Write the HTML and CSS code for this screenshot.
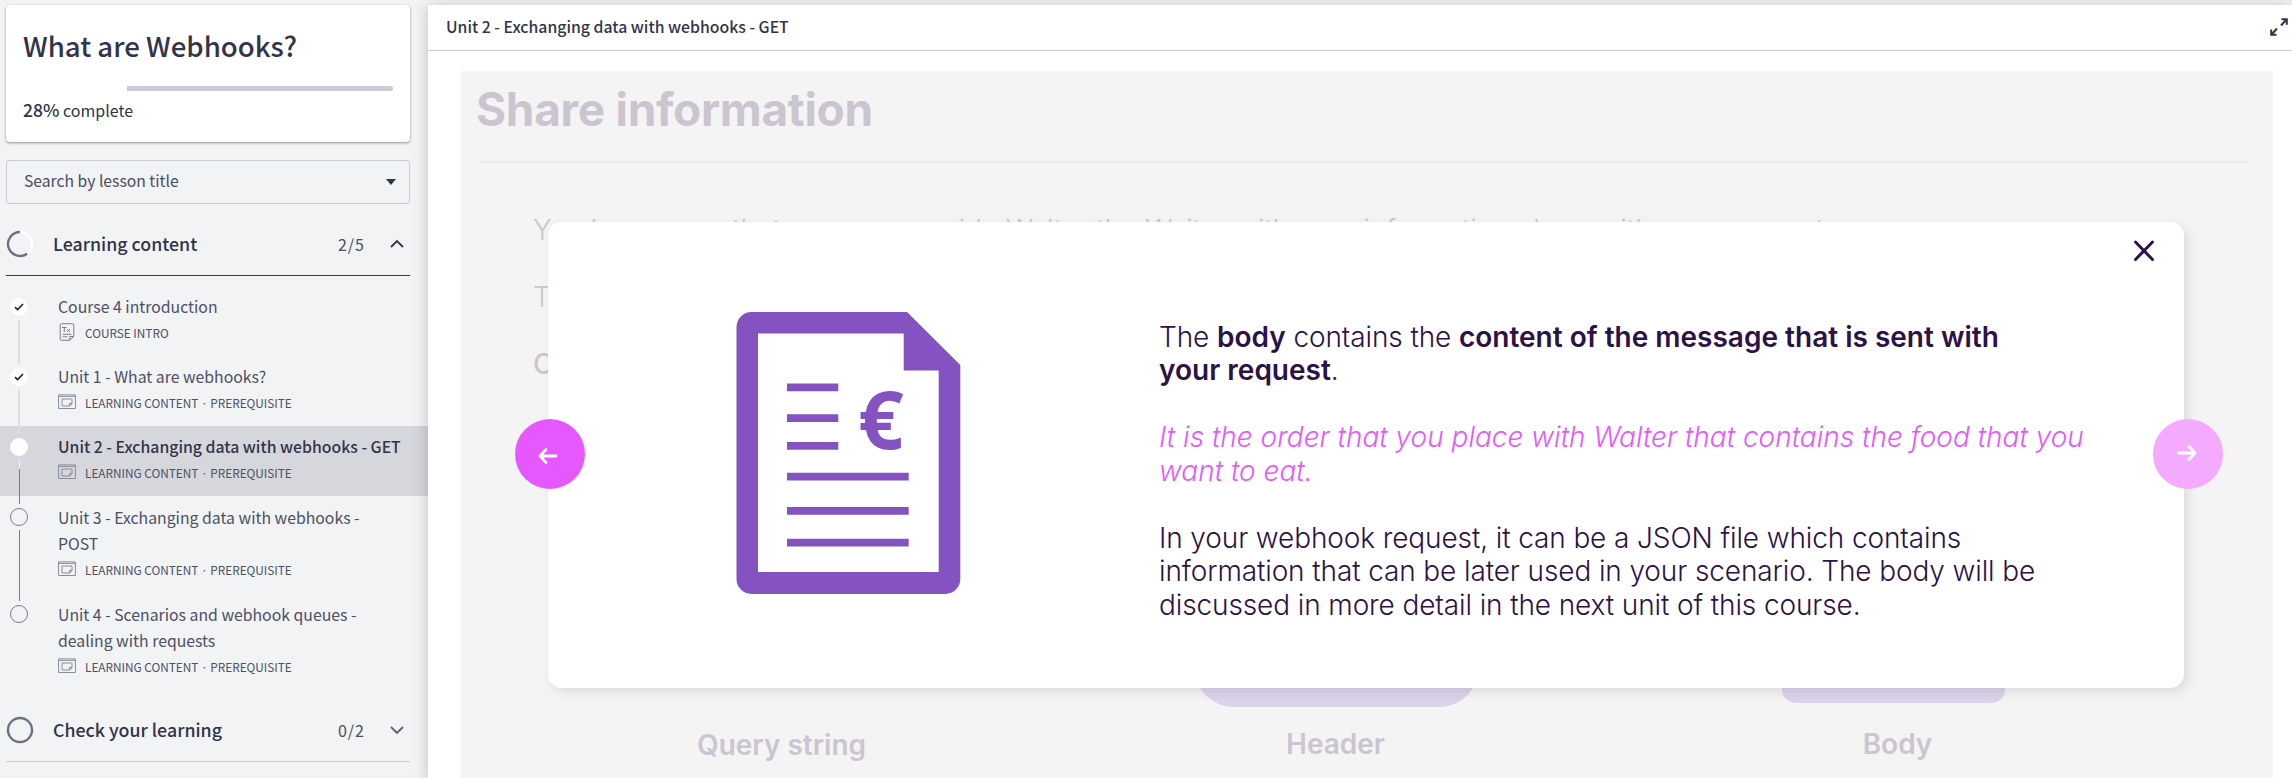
FILE: index.html
```html
<!DOCTYPE html>
<html lang="en">
<head>
<meta charset="utf-8">
<title>What are Webhooks?</title>
<link rel="stylesheet" href="styles.css">
</head>
<body>
<svg class="defs" aria-hidden="true">
  <symbol id="i-slide" viewBox="0 0 18 16"><path d="M.6.9h16.8v13.6H.6zM.6 2.4h16.8M4 5h10v4.8L11.600 12H4zM14 9.400h-2.600V12"/></symbol>
  <symbol id="i-check" viewBox="0 0 10 8"><path d="M1 4.200l2.600 2.400L9 1"/></symbol>
</svg>
<div class="app">
  <aside class="sidebar">
    <section class="card">
      <h1 class="card-title"><span>What are Webhooks?</span></h1>
      <div class="progress"><div class="progress-done"></div><div class="progress-rest"></div></div>
      <p class="complete"><b>28%</b> complete</p>
    </section>
    <div class="search"><span>Search by lesson title</span><svg class="caret" viewBox="0 0 10 6"><path d="M0 0h10L5 6z"/></svg></div>
    <div class="chapter chapter-open">
      <svg class="ring" viewBox="0 0 28 28"><circle cx="14" cy="14" r="12" stroke="#fff"/><path d="M14 2A12 12 0 1 0 21.100 23.700" stroke="#6f7183"/></svg>
      <span class="chapter-name">Learning content</span><span class="count">2/5</span>
      <svg class="chev" viewBox="0 0 14 8"><path d="M1 7l6-6 6 6"/></svg>
    </div>
    <ol class="lessons">
      <li class="lesson first">
        <div class="track"><i class="dot done"><svg><use href="#i-check"/></svg></i><i class="line pale"></i></div>
        <div class="info"><div class="name">Course 4 introduction</div>
          <div class="meta"><svg class="ico-page" viewBox="0 0 16 18"><path d="M2.500.700h11q1.300 0 1.300 1.300v11l-4 4.300H2.500q-1.300 0-1.300-1.300V2Q1.200.700 2.500.700zM14.800 13.500h-4V17M3.500 11.300h9M3.500 13.800h5"/><path class="tx" d="M3 4.500h4.500M5.300 4.500v4.500M8 6l3 3M11 6L8 9"/></svg><span>COURSE INTRO</span></div></div>
      </li>
      <li class="lesson">
        <div class="track"><i class="dot done"><svg><use href="#i-check"/></svg></i><i class="line pale"></i></div>
        <div class="info"><div class="name">Unit 1 - What are webhooks?</div>
          <div class="meta"><svg class="ico"><use href="#i-slide"/></svg><span>LEARNING CONTENT · PREREQUISITE</span></div></div>
      </li>
      <li class="lesson current">
        <div class="track"><i class="dot done"></i><i class="line next-line"></i></div>
        <div class="info"><div class="name">Unit 2 - Exchanging data with webhooks - GET</div>
          <div class="meta"><svg class="ico"><use href="#i-slide"/></svg><span>LEARNING CONTENT · PREREQUISITE</span></div></div>
      </li>
      <li class="lesson tall">
        <div class="track"><i class="dot"></i><i class="line"></i></div>
        <div class="info"><div class="name">Unit 3 - Exchanging data with webhooks -<br>POST</div>
          <div class="meta"><svg class="ico"><use href="#i-slide"/></svg><span>LEARNING CONTENT · PREREQUISITE</span></div></div>
      </li>
      <li class="lesson tall">
        <div class="track"><i class="dot"></i></div>
        <div class="info"><div class="name">Unit 4 - Scenarios and webhook queues -<br>dealing with requests</div>
          <div class="meta"><svg class="ico"><use href="#i-slide"/></svg><span>LEARNING CONTENT · PREREQUISITE</span></div></div>
      </li>
    </ol>
    <div class="chapter">
      <svg class="ring" viewBox="0 0 28 28"><circle cx="14" cy="14" r="12" stroke="#6f7183"/></svg>
      <span class="chapter-name">Check your learning</span><span class="count">0/2</span>
      <svg class="chev closed" viewBox="0 0 14 8"><path d="M1 1l6 6 6-6"/></svg>
    </div>
  </aside>
  <main class="main">
    <header class="bar"><span class="bar-title">Unit 2 - Exchanging data with webhooks - GET</span>
      <svg class="expand" viewBox="0 0 18 18"><path d="M11 7.500l5.500-6M11.500 1.200h5.300v5.500M7 10.500l-5.500 6M1.200 11.500v5.300h5.300"/></svg>
    </header>
    <div class="sheet">
      <h2 class="sheet-title"><span>Share information</span></h2>
      <div class="copy">
        <p><span>You have seen that you can provide Walter the Waiter with your information along with your request.</span></p>
        <p>There are three ways:</p>
        <p class="strong">Click on them:</p>
      </div>
      <div class="kinds">
        <div class="kind query"><span>Query string</span></div>
        <div class="kind header"><div class="shape"></div><span>Header</span></div>
        <div class="kind body"><div class="shape"></div><span>Body</span></div>
      </div>
      <div class="modal">
        <div class="figure">
          <svg class="doc" viewBox="736 312 225 283">
            <path fill="#8552c1" fill-rule="evenodd" d="M751.500 312H907l53.300 53V579a15 15 0 0 1-15 15H751.500a15 15 0 0 1-15-15V327a15 15 0 0 1 15-15zM758 333.500V572h180.700V370.500h-35v-37z"/>
            <path fill="#8552c1" d="M787 383.500h51.300v7.700H787zM787 414.300h51.300v7.700H787zM787 442h51.300v7.700H787zM787 472.700h121.700v7.700H787zM787 507h121.700v7.700H787zM787 538.700h121.700v7.700H787z"/>
            <text x="858" y="449" class="euro">€</text>
          </svg>
        </div>
        <div class="message">
          <p>The <b>body</b> contains the <b>content of the message that is sent with</b><br><b>your request</b>.</p>
          <p class="pink">It is the order that you place with Walter that contains the food that you<br>want to eat.</p>
          <p>In your webhook request, it can be a JSON file which contains<br>information that can be later used in your scenario. The body will be<br>discussed in more detail in the next unit of this course.</p>
        </div>
        <svg class="close" viewBox="0 0 24 24"><path d="M3.500 3l17 17.500M20.500 3l-17 17.500"/></svg>
        <div class="nav prev"><svg viewBox="0 0 20 16"><path d="M18 8H2.500M8 1.500L2 8l6 6.500"/></svg></div>
        <div class="nav next"><svg viewBox="0 0 20 16"><path d="M1.500 8H18M12 1.500L18 8l-6 6.500"/></svg></div>
      </div>
    </div>
  </main>
</div>
</body>
</html>
```
FILE: styles.css
```css
* { box-sizing: border-box; }
body { margin: 0; width: 2292px; height: 778px; overflow: hidden; background: #f1f3f5; font-family: "Noto Sans CJK JP", "Noto Sans", sans-serif; color: #32344a; }
h1, h2, p, ol { margin: 0; padding: 0; font-weight: 400; }
svg { fill: none; stroke: currentColor; flex: none; overflow: visible; }
.defs { position: absolute; width: 0; height: 0; }
.app { display: flex; height: 778px; padding-top: 5px; }
.sidebar { width: 428px; flex: none; }
.card { margin: 0 0 0 6px; width: 404px; height: 137px; padding: 20px 17px 0 18px; background: #fff; border-radius: 4px; box-shadow: 0 1px 3px rgba(0,0,0,.4); }
.card-title { font-size: 27.600px; line-height: 40px; font-weight: 500; white-space: nowrap; text-indent: -1px; }
.progress { display: flex; height: 5px; margin-top: 21px; }
.progress-done { width: 103px; }
.progress-rest { flex: 1; background: #c9cbd6; border-radius: 0 3px 3px 0; }
.complete { margin-top: 7px; font-size: 16px; line-height: 24px; text-indent: -1px; }
.complete b { font-weight: 500; font-size: 17.500px; }
.search { margin: 18px 0 0 6px; width: 404px; height: 44px; padding: 0 13px 3px 17px; display: flex; align-items: center; justify-content: space-between; border: 1px solid #c9cbd6; border-radius: 4px; font-size: 15.700px; color: #4b4d60; }
.caret { width: 10px; height: 6px; fill: #32344a; stroke: none; position: relative; top: 1px; }
.chapter { margin-left: 6px; width: 404px; height: 63px; display: flex; align-items: center; border-bottom: 1px solid #c9cbd6; }
.chapter-open { margin-top: 9px; border-color: #32344a; }
.ring { width: 28px; height: 28px; stroke-width: 2.400; margin: 0 19px 0 0; }
.chapter-name { flex: 1; font-size: 17.800px; font-weight: 500; padding-bottom: 2px; }
.count { font-size: 16px; letter-spacing: 1px; margin-right: 25px; padding-bottom: 1px; color: #4b4d60; }
.chev { width: 14px; height: 8px; margin-right: 6px; stroke-width: 1.800; }
.closed { color: #5d5f72; }
.lessons { list-style: none; padding: 10px 0 9px; }
.lesson { display: flex; height: 70px; padding: 8px 0 0 10px; color: #4e5064; }
.lesson.tall { height: 97px; }
.tall .info { padding-top: 1px; }
.current { background: #d6d7dc; }
.current .name { font-weight: 500; color: #32344a; }
.track { width: 18px; margin-right: 30px; display: flex; flex-direction: column; align-items: center; gap: 4px; padding-top: 4px; margin-bottom: -8px; }
.dot { width: 18px; height: 18px; flex: none; border: 1.500px solid #7b7d8e; border-radius: 50%; display: flex; align-items: center; justify-content: center; color: #222; }
.dot.done { background: #fff; border-color: #fff; }
.dot svg { width: 10px; height: 8px; stroke-width: 1.600; }
.line { width: 1px; flex: 1; background: #7b7d8e; }
.line.pale { width: 2px; background: #dcdee2; }
.next-line { background: linear-gradient(#f1f3f5 9px, #7b7d8e 9px); }
.name { font-size: 15.800px; line-height: 26px; white-space: nowrap; }
.meta { display: flex; align-items: center; height: 24px; font-size: 11.800px; white-space: nowrap; }
.ico { width: 18px; height: 16px; margin-right: 9px; color: #8a8c9b; }
.ico-page { width: 16px; height: 18px; margin: 0 10px 0 1px; color: #7d7f90; }
.main { flex: 1; background: #fff; box-shadow: 0 2px 14px rgba(0,0,0,.22); min-width: 0; }
.bar { height: 46px; border-bottom: 1px solid #c9cbd6; padding: 0 4px 2px 18px; display: flex; align-items: center; justify-content: space-between; }
.bar-title { font-size: 15.800px; font-weight: 500; }
.expand { width: 18px; height: 18px; stroke-width: 2; }
.sheet { position: relative; margin: 20px 0 0 33px; width: 1812px; height: 707px; background: #f4f4f4; font-family: "Inter Light", Inter, sans-serif; color: #cbc5d1; overflow: hidden; }
.sheet-title { height: 92px; margin: 0 23px 0 20px; border-bottom: 2px solid #eaeaea; font-family: Inter, sans-serif; font-size: 46px; line-height: 76px; font-weight: 700; letter-spacing: -.300px; text-indent: -5px; }
.copy { padding: 50px 0 0 72px; font-size: 28px; font-weight: 300; line-height: 34px; }
.copy p { margin-bottom: 33px; white-space: nowrap; }
.copy .strong { font-family: Inter, sans-serif; font-weight: 500; }
.kinds { position: absolute; inset: 560px 0 0 0; font-family: Inter, sans-serif; font-size: 28px; font-weight: 600; }
.kind { position: absolute; top: 0; display: flex; flex-direction: column; align-items: center; }
.query { left: 236px; top: 97px; }
.header { left: 734px; }
.body { left: 1321px; }
.header .shape { width: 283px; height: 76px; border-radius: 40px; background: #dcd2ea; margin-bottom: 20px; }
.body .shape { width: 223px; height: 72px; border-radius: 14px; background: #dcd2ea; margin-bottom: 24px; }
.header span { padding-right: 2px; }
.body span { padding-left: 8px; }
.modal { position: absolute; left: 87px; top: 150.500px; width: 1636px; height: 466px; background: #fff; border-radius: 14px; box-shadow: 4px 4px 12px rgba(0,0,0,.1); color: #2d1248; display: flex; padding-top: 90.500px; }
.figure { width: 611px; padding-left: 188px; flex: none; }
.doc { width: 225px; height: 283px; stroke: none; }
.euro { font: 700 80px "Open Sans", sans-serif; fill: #8552c1; }
.message { font-size: 28px; line-height: 33.500px; font-weight: 300; white-space: nowrap; padding-top: 8.500px; letter-spacing: -.110px; }
.message p { margin-bottom: 33.500px; }
.message b { font-family: Inter, sans-serif; font-weight: 600; letter-spacing: 0; }
.message .pink { color: #e657ff; font-style: italic; letter-spacing: 0; }
.close { position: absolute; right: 28px; top: 17px; width: 24px; height: 24px; stroke-width: 3; stroke-linecap: round; }
.nav { position: absolute; top: 197.500px; width: 70px; height: 70px; border-radius: 50%; display: flex; align-items: center; justify-content: center; color: #fff; }
.nav svg { width: 20px; height: 16px; stroke-width: 2.800; stroke-linecap: round; stroke-linejoin: round; }
.prev { left: -33.500px; background: #e657ff; padding: 3px 4px 0 0; }
.next { right: -39px; background: #f3aaff; padding: 0 3px 3px 0; }
```
